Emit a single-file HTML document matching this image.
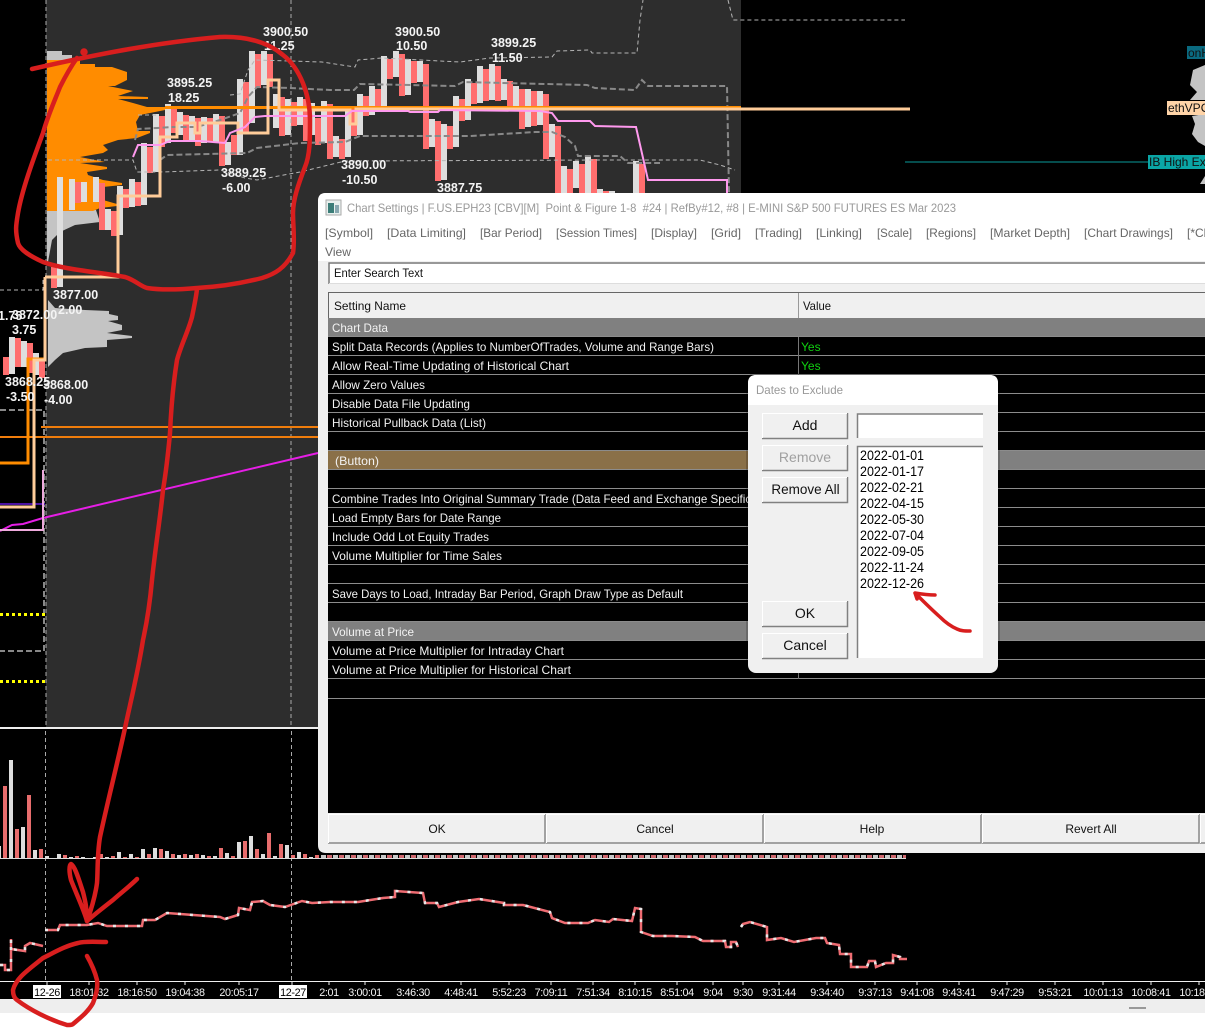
<!DOCTYPE html>
<html><head><meta charset="utf-8"><title>Chart Settings</title>
<style>
html,body{margin:0;padding:0;background:#fff;width:1205px;height:1029px;overflow:hidden}
svg{display:block;font-family:"Liberation Sans",sans-serif}
.l{font-size:12.5px;font-weight:bold;fill:#f4f4f4}
.t{font-size:12px;fill:#f2f2f2}
.m{font-size:12px;fill:#666}
.a{font-size:10.8px;fill:#f4f4f4;text-anchor:middle;letter-spacing:-.35px}
.d{font-size:14px;fill:#000}
.b{font-size:14px;fill:#111;text-anchor:middle}
.c{font-size:12px;fill:#111;text-anchor:middle}
</style></head><body>
<svg xmlns="http://www.w3.org/2000/svg" width="1205" height="1029" viewBox="0 0 1205 1029">
<rect width="1205" height="1029" fill="#fff"/>
<rect width="1205" height="999" fill="#000"/>
<rect y="999" width="1205" height="14" fill="#eee"/>
<rect x="1129" y="1007" width="17" height="2" fill="#999"/>
<rect x="46" width="695" height="727" fill="#2d2d2d"/>
<rect y="727" width="318" height="2" fill="#eee"/>

<!-- profiles -->
<path fill="#c4c4c4" d="M47 51H62V55H72V60H47Z"/>
<path fill="#c4c4c4" d="M47 210H96L100 222L75 225L60 232L52 240L48 262L47 262Z"/>
<path fill="#c4c4c4" d="M48 300L55 308L85 310L109 311L109 314L118 316L118 320L108 321L122 325L122 330L107 333L132 336L132 338L107 340L107 347L85 348L63 353L55 360L48 367Z"/>
<path fill="#ff8c00" d="M47 60H80V64H95V67H112L127 72V80L115 86H108L133 91L118 96L148 97V99H118L133 103L147 107H165V110L140 115L136 122L138 131H150V133L137 138L118 140L103 145L108 150L103 153L80 157L105 162L80 163L107 167V169L87 172L88 175L103 180L122 183V185L103 187V200L117 204V206L100 208L93 211H47Z"/>
<path fill="#c4c4c4" d="M1205 65L1193 70L1190 85L1197 92L1190 100L1205 100ZM1205 114L1192 116L1195 124L1192 134L1198 142L1205 146ZM1205 176L1200 184H1205Z"/>

<!-- price bars -->
<path fill="#dedede" d="M9 337h6v37h-6zM21 341h6v26h-6zM33 353h6v22h-6zM57 177h6v110h-6zM69 179h6v31h-6zM81 182h6v20h-6zM93 177h6v25h-6zM105 209h6v21h-6zM117 186h6v49h-6zM129 179h6v28h-6zM141 143h6v62h-6zM153 114h6v58h-6zM165 104h6v39h-6zM177 112h6v23h-6zM189 116h6v25h-6zM201 117h6v26h-6zM213 114h6v29h-6zM225 142h6v23h-6zM237 79h6v76h-6zM249 51h6v72h-6zM261 51h6v34h-6zM273 94h6v34h-6zM285 99h6v36h-6zM297 97h6v28h-6zM309 103h6v32h-6zM321 101h6v42h-6zM333 136h6v21h-6zM345 107h6v50h-6zM357 94h6v41h-6zM369 86h6v29h-6zM381 56h6v51h-6zM393 51h6v26h-6zM405 59h6v36h-6zM417 61h6v21h-6zM429 119h6v28h-6zM441 124h6v56h-6zM453 96h6v51h-6zM465 79h6v41h-6zM477 66h6v37h-6zM489 64h6v36h-6zM501 79h6v21h-6zM513 86h6v21h-6zM525 89h6v38h-6zM537 91h6v34h-6zM549 124h6v33h-6zM561 166h6v27h-6zM573 161h6v27h-6zM585 156h6v37h-6zM597 189h6v4h-6zM609 191h6v2h-6zM633 161h6v32h-6z"/>
<path fill="#ff6e6e" d="M3 357h6v18h-6zM15 338h6v29h-6zM27 343h6v30h-6zM39 358h6v20h-6zM51 267h6v21h-6zM75 182h6v21h-6zM99 183h6v47h-6zM111 211h6v25h-6zM123 189h6v19h-6zM135 182h6v24h-6zM147 147h6v26h-6zM159 116h6v31h-6zM171 106h6v27h-6zM183 115h6v25h-6zM195 118h6v28h-6zM207 118h6v24h-6zM219 116h6v50h-6zM231 135h6v20h-6zM243 82h6v50h-6zM255 54h6v34h-6zM267 54h6v33h-6zM279 97h6v39h-6zM291 102h6v24h-6zM303 99h6v42h-6zM315 118h6v27h-6zM327 104h6v55h-6zM339 139h6v20h-6zM351 107h6v29h-6zM363 96h6v20h-6zM375 89h6v18h-6zM387 59h6v20h-6zM399 54h6v42h-6zM411 61h6v22h-6zM423 64h6v85h-6zM435 121h6v60h-6zM447 126h6v23h-6zM459 99h6v22h-6zM471 83h6v21h-6zM483 69h6v32h-6zM495 66h6v35h-6zM507 81h6v26h-6zM519 89h6v40h-6zM531 91h6v35h-6zM543 94h6v65h-6zM555 126h6v67h-6zM567 169h6v24h-6zM579 164h6v29h-6zM591 159h6v34h-6zM603 191h6v2h-6zM639 164h6v29h-6z"/>

<!-- vertical dashed -->
<g fill="none" stroke="#aaa" stroke-width="1" stroke-dasharray="4 3">
<path d="M46 0V727M291 0V727M45.500 731V981M291.500 731V981"/>
</g>

<!-- dashed bands -->
<g fill="none" stroke="#b5b5b5" stroke-width="1" stroke-dasharray="4 3">
<path d="M230 95L240 94L248 70L255 60L290 61L322 62L355 67L358 60L382 58L460 62L490 58L552 57L557 51L590 50L592 53L637 53L640 20L643 0"/>
<path d="M728 0L733 20H905"/>
<path d="M48 160H133L137 172H160L220 170L245 178L257 180L300 172L345 161L600 160H700L720 165L735 170"/>
<path d="M138 115H157M0 290H43V278"/>
</g>
<g fill="none" stroke="#888" stroke-width="2" stroke-dasharray="6 3">
<path d="M135 140L138 129L157 128L173 127L197 127L220 120L240 113L248 97L257 87L290 88L330 90L354 90L360 84L455 86L463 82L587 85L595 88L635 90L642 80L648 86L727 86L729 193"/>
<path d="M160 160L167 155L247 153L257 148L300 143L345 142L360 136L470 136L535 132L552 132L565 137L575 146L578 156L620 156L628 163L660 163"/>
<path d="M0 410H44V651H0"/>
</g>
<path d="M0 614.500H45M0 681.500H45" stroke="#ffff00" stroke-width="3" stroke-dasharray="3 3" fill="none"/>

<!-- levels -->
<path d="M41 427H318M0 437H318" stroke="#f07d0c" stroke-width="2" fill="none"/>
<path d="M0 504H45" stroke="#4a12a0" stroke-width="2" fill="none"/>
<path d="M0 531L12 525L23 524L43 518L318 453" stroke="#e61ee6" stroke-width="2" fill="none"/>
<path d="M0 530H43V470" stroke="#eeaadd" stroke-width="2" fill="none"/>
<path d="M0 463H28V359H45" stroke="#ff8c00" stroke-width="3" fill="none"/>
<path d="M0 507H34V360H45V277" stroke="#ffcc99" stroke-width="3" fill="none"/>
<path d="M165 107.500H741" stroke="#ff8c00" stroke-width="3" fill="none"/>
<path d="M45 277H118V196H160V137H177V123H195V133H200V123H238V133H268V80H279V110H350V124H356V109H910" stroke="#ffcc99" stroke-width="3" fill="none"/>
<path d="M133 157L138 145H160L170 141H200L225 143L230 133L245 127L255 117L265 116H345L352 111H408L410 112H438L440 110L540 111L552 113L558 121H590L595 126L636 127L648 180H727V193" stroke="#ff99ee" stroke-width="2" fill="none"/>
<path d="M905 162H1148" stroke="#0a9a9a" stroke-width="1" fill="none"/>

<!-- right labels -->
<rect x="1187" y="46" width="18" height="13" fill="#0a6a80"/>
<text x="1188" y="57" font-size="12" fill="#111">onH</text>
<rect x="1167" y="101" width="38" height="14" fill="#ffd4a8"/>
<text x="1168" y="112" font-size="12" fill="#111">ethVPOC</text>
<rect x="1148" y="155" width="57" height="14" fill="#0aa5a5"/>
<text x="1149" y="166" font-size="12" fill="#111">IB High Ext</text>

<!-- chart labels -->
<text class="l" x="263" y="36">3900.50</text><text class="l" x="264" y="50">11.25</text>
<text class="l" x="395" y="36">3900.50</text><text class="l" x="396" y="50">10.50</text>
<text class="l" x="491" y="47">3899.25</text><text class="l" x="492" y="62">11.50</text>
<text class="l" x="167" y="87">3895.25</text><text class="l" x="168" y="102">18.25</text>
<text class="l" x="221" y="177">3889.25</text><text class="l" x="222" y="192">-6.00</text>
<text class="l" x="341" y="169">3890.00</text><text class="l" x="342" y="184">-10.50</text>
<text class="l" x="437" y="192">3887.75</text>
<text class="l" x="53" y="299">3877.00</text><text class="l" x="58" y="314">2.00</text>
<text class="l" x="-2" y="320">1.75</text><text class="l" x="12" y="319">3872.00</text><text class="l" x="12" y="334">3.75</text>
<text class="l" x="5" y="386">3868.25</text><text class="l" x="6" y="401">-3.50</text>
<text class="l" x="43" y="389">3868.00</text><text class="l" x="44" y="404">-4.00</text>

<!-- volume -->
<path fill="#dedede" d="M0 846h1v12h-1zM9 760h4v98h-4zM21 827h4v31h-4zM33 850h4v8h-4zM45 856h4v2h-4zM57 854h4v4h-4zM69 857h4v1h-4zM81 857h4v1h-4zM93 857h4v1h-4zM105 857h4v1h-4zM117 852h4v6h-4zM129 854h4v4h-4zM141 849h4v9h-4zM153 848h4v10h-4zM165 851h4v7h-4zM177 855h4v3h-4zM189 855h4v3h-4zM201 855h4v3h-4zM213 856h4v2h-4zM225 853h4v5h-4zM237 842h4v16h-4zM249 836h4v22h-4zM261 854h4v4h-4zM273 856h4v2h-4zM285 845h4v13h-4zM297 852h4v6h-4zM309 857h4v1h-4z"/>
<path fill="#e86d6d" d="M3 786h4v72h-4zM15 829h4v29h-4zM27 795h4v63h-4zM39 849h4v9h-4zM63 855h4v3h-4zM75 856h4v2h-4zM99 854h4v4h-4zM111 856h4v2h-4zM123 857h4v1h-4zM135 857h4v1h-4zM147 854h4v4h-4zM159 849h4v9h-4zM171 854h4v4h-4zM183 854h4v4h-4zM195 854h4v4h-4zM207 856h4v2h-4zM219 848h4v10h-4zM231 856h4v2h-4zM243 841h4v17h-4zM255 849h4v9h-4zM267 833h4v25h-4zM279 844h4v14h-4zM291 855h4v3h-4zM303 854h4v4h-4zM315 855h4v3h-4z"/>
<rect x="0" y="858" width="906" height="1" fill="#dcdcdc"/>
<path d="M321 856.500H906" stroke="#c8c8c8" stroke-width="3" stroke-dasharray="5 7" fill="none"/>
<path d="M327 856.500H906" stroke="#d0686e" stroke-width="3" stroke-dasharray="5 7" fill="none"/>

<!-- bottom line -->
<g fill="none" stroke-width="2.500">
<g stroke="#ee6c72">
<path d="M0 965H5V970H11V939V949L25 951V946L30 943L43 946"/>
<path d="M45 930H58L60 925H87L98 923L107 926H142L143 920H155L167 913L220 917L225 919L238 915L239 908L250 910L252 902L263 901L270 905L285 907L302 901L312 903L330 902L358 902L383 898L395 897V891L423 893L425 903H437L439 907L458 902L479 899L504 903V905H523L550 912L552 918L565 923H588L595 920L609 922L613 919L632 921L635 908L641 909V932L653 936H672L695 937L703 941H725L726 947H731V942H736L738 947"/>
<path d="M741 927L743 924L750 922L767 927V940L781 938L794 942L816 938H825L827 943L839 945L840 954H851V967H867L869 961H875L876 967L886 963H893V955L900 957V959H907"/>
</g>
<g stroke="#e8e8e8" stroke-dasharray="3 9">
<path d="M0 965H5V970H11V939V949L25 951V946L30 943L43 946"/>
<path d="M45 930H58L60 925H87L98 923L107 926H142L143 920H155L167 913L220 917L225 919L238 915L239 908L250 910L252 902L263 901L270 905L285 907L302 901L312 903L330 902L358 902L383 898L395 897V891L423 893L425 903H437L439 907L458 902L479 899L504 903V905H523L550 912L552 918L565 923H588L595 920L609 922L613 919L632 921L635 908L641 909V932L653 936H672L695 937L703 941H725L726 947H731V942H736L738 947"/>
<path d="M741 927L743 924L750 922L767 927V940L781 938L794 942L816 938H825L827 943L839 945L840 954H851V967H867L869 961H875L876 967L886 963H893V955L900 957V959H907"/>
</g>
</g>

<!-- axis -->
<rect y="981" width="1205" height="1" fill="#f0f0f0"/>
<path stroke="#eee" fill="none" d="M47 981V985M89 981V985M137 981V985M185 981V985M239 981V985M292 981V985M329 981V985M365 981V985M413 981V985M461 981V985M509 981V985M551 981V985M593 981V985M635 981V985M677 981V985M713 981V985M743 981V985M779 981V985M827 981V985M875 981V985M917 981V985M959 981V985M1007 981V985M1055 981V985M1103 981V985M1151 981V985M1199 981V985"/>
<rect x="33" y="985" width="28" height="13" fill="#fff"/>
<rect x="279" y="985" width="28" height="13" fill="#fff"/>
<text class="a" x="47" y="996" style="fill:#000">12-26</text>
<text class="a" x="89" y="996">18:01:32</text>
<text class="a" x="137" y="996">18:16:50</text>
<text class="a" x="185" y="996">19:04:38</text>
<text class="a" x="239" y="996">20:05:17</text>
<text class="a" x="293" y="996" style="fill:#000">12-27</text>
<text class="a" x="329" y="996">2:01</text>
<text class="a" x="365" y="996">3:00:01</text>
<text class="a" x="413" y="996">3:46:30</text>
<text class="a" x="461" y="996">4:48:41</text>
<text class="a" x="509" y="996">5:52:23</text>
<text class="a" x="551" y="996">7:09:11</text>
<text class="a" x="593" y="996">7:51:34</text>
<text class="a" x="635" y="996">8:10:15</text>
<text class="a" x="677" y="996">8:51:04</text>
<text class="a" x="713" y="996">9:04</text>
<text class="a" x="743" y="996">9:30</text>
<text class="a" x="779" y="996">9:31:44</text>
<text class="a" x="827" y="996">9:34:40</text>
<text class="a" x="875" y="996">9:37:13</text>
<text class="a" x="917" y="996">9:41:08</text>
<text class="a" x="959" y="996">9:43:41</text>
<text class="a" x="1007" y="996">9:47:29</text>
<text class="a" x="1055" y="996">9:53:21</text>
<text class="a" x="1103" y="996">10:01:13</text>
<text class="a" x="1151" y="996">10:08:41</text>
<text class="a" x="1199" y="996">10:18:02</text>

<!-- Chart Settings dialog -->
<path fill="#f0f0f0" d="M326 193H1205V853H326Q318 853 318 845V201Q318 193 326 193Z"/>
<path fill="#fff" d="M326 193H1205V261H318V201Q318 193 326 193Z"/>
<rect x="326" y="200" width="15" height="15" fill="#e8f0ee" stroke="#aaa"/>
<rect x="328" y="203" width="6" height="10" fill="#3b7d78"/>
<rect x="335" y="205" width="4" height="8" fill="#88a8b0"/>
<text font-size="12" fill="#999" x="347" y="212" textLength="609" lengthAdjust="spacingAndGlyphs">Chart Settings | F.US.EPH23 [CBV][M]&#160; Point &amp; Figure 1-8&#160; #24 | RefBy#12, #8 | E-MINI S&amp;P 500 FUTURES ES Mar 2023</text>
<text class="m" x="325" y="237" textLength="48" lengthAdjust="spacingAndGlyphs">[Symbol]</text>
<text class="m" x="387" y="237" textLength="79" lengthAdjust="spacingAndGlyphs">[Data Limiting]</text>
<text class="m" x="480" y="237" textLength="62" lengthAdjust="spacingAndGlyphs">[Bar Period]</text>
<text class="m" x="556" y="237" textLength="81" lengthAdjust="spacingAndGlyphs">[Session Times]</text>
<text class="m" x="651" y="237" textLength="46" lengthAdjust="spacingAndGlyphs">[Display]</text>
<text class="m" x="711" y="237" textLength="30" lengthAdjust="spacingAndGlyphs">[Grid]</text>
<text class="m" x="755" y="237" textLength="47" lengthAdjust="spacingAndGlyphs">[Trading]</text>
<text class="m" x="816" y="237" textLength="46" lengthAdjust="spacingAndGlyphs">[Linking]</text>
<text class="m" x="877" y="237" textLength="35" lengthAdjust="spacingAndGlyphs">[Scale]</text>
<text class="m" x="926" y="237" textLength="50" lengthAdjust="spacingAndGlyphs">[Regions]</text>
<text class="m" x="990" y="237" textLength="80" lengthAdjust="spacingAndGlyphs">[Market Depth]</text>
<text class="m" x="1084" y="237" textLength="89" lengthAdjust="spacingAndGlyphs">[Chart Drawings]</text>
<text class="m" x="1187" y="237">[*Chart]</text>
<text class="m" x="325" y="256" textLength="26" lengthAdjust="spacingAndGlyphs">View</text>

<rect x="328" y="262" width="877" height="22" fill="#fff"/>
<path d="M329 284V263H1205" stroke="#777" stroke-width="1.500" fill="none"/>
<path d="M329 283.500H1205" stroke="#ddd" fill="none"/>
<text font-size="12" fill="#111" x="334" y="277" textLength="89" lengthAdjust="spacingAndGlyphs">Enter Search Text</text>

<rect x="328" y="318" width="877" height="495" fill="#000"/>
<path d="M328 292.500H1205M328.500 292V318" stroke="#666" fill="none"/>
<path d="M798.500 293V318" stroke="#999" fill="none"/>
<text font-size="12" fill="#111" x="334" y="310" textLength="72" lengthAdjust="spacingAndGlyphs">Setting Name</text>
<text font-size="12" fill="#111" x="803" y="310" textLength="28" lengthAdjust="spacingAndGlyphs">Value</text>

<rect x="328" y="318" width="877" height="19" fill="#808080"/>
<rect x="328" y="451" width="470" height="19" fill="#8a7048"/>
<rect x="798" y="451" width="407" height="19" fill="#808080"/>
<rect x="328" y="622" width="877" height="19" fill="#808080"/>
<path stroke="#8c8c8c" fill="none" d="M328 336.500H1205M328 355.500H1205M328 374.500H1205M328 393.500H1205M328 412.500H1205M328 431.500H1205M328 450.500H1205M328 469.500H1205M328 488.500H1205M328 507.500H1205M328 526.500H1205M328 545.500H1205M328 564.500H1205M328 583.500H1205M328 602.500H1205M328 621.500H1205M328 640.500H1205M328 659.500H1205M328 678.500H1205M328 698.500H1205"/>
<path stroke="#777" fill="none" d="M798.500 337V679"/>

<text class="t" x="332" y="332" textLength="56" lengthAdjust="spacingAndGlyphs">Chart Data</text>
<text class="t" x="332" y="351" textLength="382" lengthAdjust="spacingAndGlyphs">Split Data Records (Applies to NumberOfTrades, Volume and Range Bars)</text>
<text class="t" x="332" y="370" textLength="237" lengthAdjust="spacingAndGlyphs">Allow Real-Time Updating of Historical Chart</text>
<text class="t" x="332" y="389" textLength="93" lengthAdjust="spacingAndGlyphs">Allow Zero Values</text>
<text class="t" x="332" y="408" textLength="138" lengthAdjust="spacingAndGlyphs">Disable Data File Updating</text>
<text class="t" x="332" y="427" textLength="154" lengthAdjust="spacingAndGlyphs">Historical Pullback Data (List)</text>
<text class="t" x="335" y="465" textLength="44" lengthAdjust="spacingAndGlyphs">(Button)</text>
<text class="t" x="332" y="503" textLength="423" lengthAdjust="spacingAndGlyphs">Combine Trades Into Original Summary Trade (Data Feed and Exchange Specific)</text>
<text class="t" x="332" y="522" textLength="169" lengthAdjust="spacingAndGlyphs">Load Empty Bars for Date Range</text>
<text class="t" x="332" y="541" textLength="157" lengthAdjust="spacingAndGlyphs">Include Odd Lot Equity Trades</text>
<text class="t" x="332" y="560" textLength="170" lengthAdjust="spacingAndGlyphs">Volume Multiplier for Time Sales</text>
<text class="t" x="332" y="598" textLength="351" lengthAdjust="spacingAndGlyphs">Save Days to Load, Intraday Bar Period, Graph Draw Type as Default</text>
<text class="t" x="332" y="636" textLength="82" lengthAdjust="spacingAndGlyphs">Volume at Price</text>
<text class="t" x="332" y="655" textLength="232" lengthAdjust="spacingAndGlyphs">Volume at Price Multiplier for Intraday Chart</text>
<text class="t" x="332" y="674" textLength="239" lengthAdjust="spacingAndGlyphs">Volume at Price Multiplier for Historical Chart</text>
<text font-size="12" fill="#10d010" x="801" y="351">Yes</text>
<text font-size="12" fill="#10d010" x="801" y="370">Yes</text>

<!-- bottom buttons -->
<g fill="#f0f0f0">
<rect x="328" y="814" width="217" height="29"/><rect x="546" y="814" width="217" height="29"/><rect x="764" y="814" width="217" height="29"/><rect x="982" y="814" width="217" height="29"/><rect x="1200" y="814" width="5" height="29"/>
</g>
<path stroke="#888" stroke-width="1.500" fill="none" d="M328 843H545V814M546 843H763V814M764 843H981V814M982 843H1199V814M1200 843H1205"/>
<path stroke="#fff" fill="none" d="M328.500 843V814.500H545M546.500 843V814.500H763M764.500 843V814.500H981M982.500 843V814.500H1199M1200.500 843V814.500H1205"/>
<text class="c" x="437" y="833">OK</text>
<text class="c" x="655" y="833">Cancel</text>
<text class="c" x="872" y="833">Help</text>
<text class="c" x="1091" y="833">Revert All</text>

<!-- Dates dialog -->
<rect x="746" y="373" width="254" height="302" rx="9" fill="#000" opacity=".18"/>
<rect x="748" y="375" width="250" height="298" rx="8" fill="#f0f0f0"/>
<path fill="#fff" d="M756 375H990Q998 375 998 383V405H748V383Q748 375 756 375Z"/>
<text font-size="12" fill="#999" x="756" y="394" textLength="87" lengthAdjust="spacingAndGlyphs">Dates to Exclude</text>
<g fill="#f0f0f0">
<rect x="762" y="413" width="86" height="26"/><rect x="762" y="445" width="86" height="26"/><rect x="762" y="477" width="86" height="26"/><rect x="762" y="601" width="86" height="26"/><rect x="762" y="633" width="86" height="26"/>
</g>
<path stroke="#808080" stroke-width="1.500" fill="none" d="M762 438.500H847.500V413M762 470.500H847.500V445M762 502.500H847.500V477M762 626.500H847.500V601M762 658.500H847.500V633"/>
<path stroke="#fff" fill="none" d="M762.500 438V413.500H847M762.500 470V445.500H847M762.500 502V477.500H847M762.500 626V601.500H847M762.500 658V633.500H847"/>
<text class="b" x="805" y="430">Add</text>
<text class="b" x="805" y="462" style="fill:#a0a0a0">Remove</text>
<text class="b" x="805.500" y="494" style="font-size:13.500px">Remove All</text>
<text class="b" x="805" y="618">OK</text>
<text class="b" x="805" y="650">Cancel</text>
<rect x="857" y="414" width="126" height="24" fill="#fff"/>
<path stroke="#808080" fill="none" stroke-width="1.500" d="M857.500 438V414H983"/>
<rect x="857" y="446" width="126" height="212" fill="#fff"/>
<path stroke="#808080" fill="none" stroke-width="1.500" d="M857.500 658V446.500H983"/>
<text class="d" x="860" y="460" textLength="64" lengthAdjust="spacingAndGlyphs">2022-01-01</text>
<text class="d" x="860" y="476" textLength="64" lengthAdjust="spacingAndGlyphs">2022-01-17</text>
<text class="d" x="860" y="492" textLength="64" lengthAdjust="spacingAndGlyphs">2022-02-21</text>
<text class="d" x="860" y="508" textLength="64" lengthAdjust="spacingAndGlyphs">2022-04-15</text>
<text class="d" x="860" y="524" textLength="64" lengthAdjust="spacingAndGlyphs">2022-05-30</text>
<text class="d" x="860" y="540" textLength="64" lengthAdjust="spacingAndGlyphs">2022-07-04</text>
<text class="d" x="860" y="556" textLength="64" lengthAdjust="spacingAndGlyphs">2022-09-05</text>
<text class="d" x="860" y="572" textLength="64" lengthAdjust="spacingAndGlyphs">2022-11-24</text>
<text class="d" x="860" y="588" textLength="64" lengthAdjust="spacingAndGlyphs">2022-12-26</text>

<!-- red annotations -->
<g fill="none" stroke="#d81e1e" stroke-width="4.500" stroke-linecap="round" stroke-linejoin="round">
<path d="M32 69C80 58 150 43 220 37C250 36 270 44 283 55C300 68 310 95 310 120C310 140 310 155 305 167C298 185 293 200 293 213C293 225 295 240 293 253C285 268 275 274 262 278C235 285 215 287 197 288C175 290 160 290 147 288C140 286 135 280 125 277C100 272 65 270 43 262C30 256 20 250 18 243C15 230 16 225 18 213C22 190 33 160 43 133C48 115 55 100 60 87C66 75 72 65 77 58"/>
<path d="M197 289C196 298 194 307 192 317C188 332 181 345 177 360C173 385 171 410 170 433C168 455 166 472 163 490C160 520 155 550 152 580C150 602 147 622 143 640C138 672 131 700 125 728C117 765 108 800 100 837C97 855 98 870 97 883C95 898 91 910 87 921"/>
<path d="M137 879C130 886 122 892 113 900C104 907 95 914 87 921C84 910 76 893 71 880C69 872 69 865 71 864C75 866 79 880 83 892C85 900 87 908 87 921"/>
<path d="M106 942C95 942 85 941 78 943C65 946 55 952 43 958C28 970 16 978 13 990C13 995 14 998 17 1000C30 1010 50 1020 67 1025C70 1025 72 1025 73 1024C80 1018 88 1012 93 1003C96 995 98 988 97 980C95 972 91 963 87 956"/>
<path d="M970 631C965 631 961 631 957 629C950 626 945 622 940 617C931 609 923 601 915 593C921 594 928 595 935 595M915 593L917 599" stroke-width="3.500"/>
<circle cx="84" cy="52" r="1.500" fill="#d81e1e"/>
</g>
</svg>
</body></html>
